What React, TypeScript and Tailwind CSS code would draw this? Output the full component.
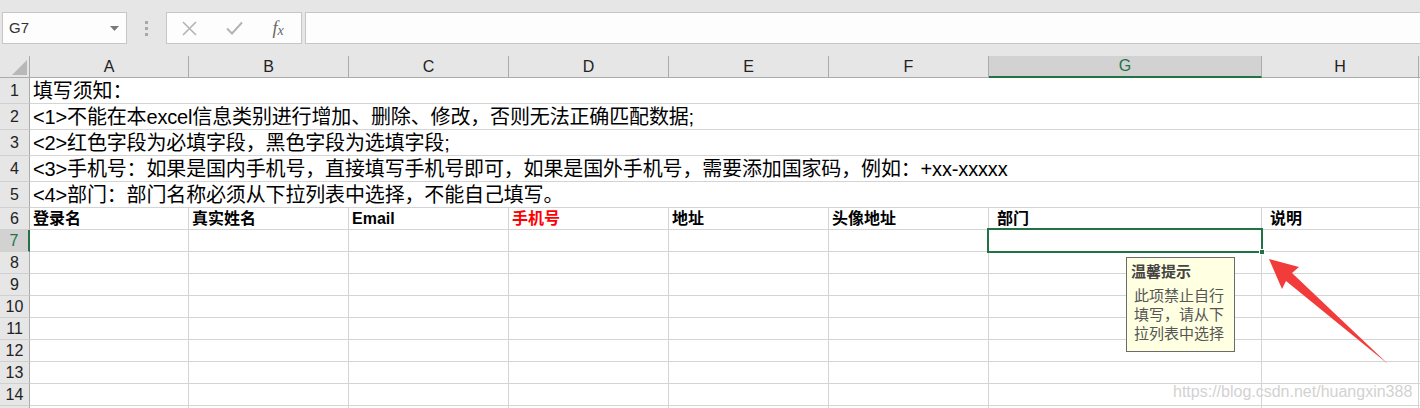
import React from "react";

const cols = [159, 160, 160, 160, 160, 160, 273, 157];
const letters = ["A", "B", "C", "D", "E", "F", "G", "H"];
const font = { fontFamily: '"Liberation Sans", "Noto Sans CJK SC", sans-serif' };

const notes = [
  "填写须知：",
  "<1>不能在本excel信息类别进行增加、删除、修改，否则无法正确匹配数据;",
  "<2>红色字段为必填字段，黑色字段为选填字段;",
  "<3>手机号：如果是国内手机号，直接填写手机号即可，如果是国外手机号，需要添加国家码，例如：+xx-xxxxx",
  "<4>部门：部门名称必须从下拉列表中选择，不能自己填写。",
];

const heads: { t: string; red?: boolean; pl: string }[] = [
  { t: "登录名", pl: "pl-[3px]" },
  { t: "真实姓名", pl: "pl-[3px]" },
  { t: "Email", pl: "pl-[3px]" },
  { t: "手机号", red: true, pl: "pl-[3px]" },
  { t: "地址", pl: "pl-[3px]" },
  { t: "头像地址", pl: "pl-[3px]" },
  { t: "部门", pl: "pl-[8px]" },
  { t: "说明", pl: "pl-[8px]" },
];

function RowHead({ n, h, active }: { n: number | null; h: string; active?: boolean }) {
  return (
    <div
      className={`${h} w-[30px] shrink-0 flex items-center justify-center border-b border-[#d0d0d0] text-[16px] ${
        active
          ? "bg-[#d2d2d2] text-[#217346] border-r-2 border-r-[#217346]"
          : "bg-[#e6e6e6] text-[#222] border-r border-r-[#ababab]"
      }`}
    >
      {n}
    </div>
  );
}

export default function App() {
  return (
    <div className="relative w-[1420px] h-[408px] overflow-hidden bg-white" style={font}>
      {/* toolbar */}
      <div className="h-[56px] bg-[#e6e6e6] relative">
        <div className="flex items-start pt-[12px]">
          <div className="ml-[2px] w-[125px] h-[32px] bg-[#fdfdfd] border border-[#c6c6c6] flex items-center pl-[6px] pr-[7px] text-[15px] text-[#333]">
            <span className="flex-1">G7</span>
            <svg width="9" height="5" viewBox="0 0 9 5">
              <path d="M0 0 L9 0 L4.5 5 Z" fill="#7a7a7a" />
            </svg>
          </div>
          <div className="w-[39px] h-[32px] flex flex-col items-center justify-center gap-[3px]">
            <div className="w-[3px] h-[3px] bg-[#a8a8a8]" />
            <div className="w-[3px] h-[3px] bg-[#a8a8a8]" />
            <div className="w-[3px] h-[3px] bg-[#a8a8a8]" />
          </div>
          <div className="w-[136px] h-[32px] bg-[#fdfdfd] border border-[#c6c6c6] flex items-center">
            <div className="w-[42px] flex justify-center ml-[1px]">
              <svg width="15" height="15" viewBox="0 0 15 15">
                <path d="M1 1 L14 14 M14 1 L1 14" stroke="#b4b4b4" strokeWidth="1.6" />
              </svg>
            </div>
            <div className="w-[48px] flex justify-center">
              <svg width="17" height="14" viewBox="0 0 17 14">
                <path d="M1 7.5 L6 12.5 L16 1.5" stroke="#b4b4b4" strokeWidth="2" fill="none" />
              </svg>
            </div>
            <div
              className="w-[40px] flex justify-center text-[18px] italic text-[#666]"
              style={{ fontFamily: '"Liberation Serif", serif' }}
            >
              <span>f</span>
              <span className="text-[14px] mt-[5px]">x</span>
            </div>
          </div>
          <div className="ml-[3px] flex-1 h-[32px] bg-[#fdfdfd] border border-[#c6c6c6] border-r-0" />
        </div>
      </div>

      {/* column header */}
      <div className="flex h-[22px] bg-[#e6e6e6]">
        <div className="w-[30px] shrink-0 border-r border-b border-[#ababab] flex items-end justify-end pr-[2px] pb-[2px]">
          <svg width="15" height="15" viewBox="0 0 15 15">
            <path d="M15 0 L15 15 L0 15 Z" fill="#b8b8b8" />
          </svg>
        </div>
        {letters.map((l, i) => (
          <div
            key={l}
            style={{ width: cols[i] }}
            className={`shrink-0 flex items-center justify-center text-[16px] border-r border-r-[#ababab] ${
              l === "G"
                ? "bg-[#d2d2d2] text-[#217346] border-b-2 border-b-[#217346]"
                : "text-[#222] border-b border-b-[#ababab]"
            }`}
          >
            {l}
          </div>
        ))}
        <div className="flex-1 border-b border-[#ababab]" />
      </div>

      {/* notes rows */}
      {notes.map((t, i) => (
        <div key={i} className="flex h-[26px]">
          <RowHead n={i + 1} h="h-[26px]" />
          <div className="w-[1389px] shrink-0 border-r border-b border-[#d4d4d4] flex items-center pl-[3px] pt-[1px] text-[20px] tracking-[-0.15px] leading-[22px] text-black whitespace-nowrap">
            {t}
          </div>
          <div className="flex-1 border-b border-[#d4d4d4]" />
        </div>
      ))}

      {/* row 6 headings */}
      <div className="flex h-[22px]">
        <RowHead n={6} h="h-[22px]" />
        {heads.map((c, i) => (
          <div
            key={i}
            style={{ width: cols[i] }}
            className={`shrink-0 border-r border-b border-[#d4d4d4] flex items-center ${c.pl} text-[16px] font-bold whitespace-nowrap ${
              c.red ? "text-[#ff0000]" : "text-black"
            }`}
          >
            {c.t}
          </div>
        ))}
        <div className="flex-1 border-b border-[#d4d4d4]" />
      </div>

      {/* empty rows */}
      {[7, 8, 9, 10, 11, 12, 13, 14, 15].map((n) => (
        <div key={n} className="flex h-[22px]">
          <RowHead n={n === 15 ? null : n} h="h-[22px]" active={n === 7} />
          {cols.map((w, i) => (
            <div key={i} style={{ width: w }} className="shrink-0 border-r border-b border-[#d4d4d4]" />
          ))}
          <div className="flex-1 border-b border-[#d4d4d4]" />
        </div>
      ))}

      {/* selection */}
      <div className="absolute left-[987px] top-[228px] w-[276px] h-[25px] border-2 border-[#217346]" />
      <div className="absolute left-[1259px] top-[249px] w-[6px] h-[6px] bg-[#217346] border border-white" />

      {/* input message tooltip */}
      <div className="absolute left-[1126px] top-[257px] w-[109px] h-[95px] bg-[#ffffe1] border border-[#6b6b6b] px-[4px] pt-[4px]">
        <div className="text-[15px] font-bold text-[#444] leading-[20px]">温馨提示</div>
        <div className="mt-[4px] pl-[3px] text-[15px] text-[#555] leading-[19px]">
          <div>此项禁止自行</div>
          <div>填写，请从下</div>
          <div>拉列表中选择</div>
        </div>
      </div>

      {/* red arrow */}
      <svg className="absolute left-0 top-0" width="1420" height="408" viewBox="0 0 1420 408">
        <polygon
          points="1269,259 1299,267 1292,273 1388,364 1286,281 1282,289"
          fill="#f23b3b"
        />
      </svg>

      {/* watermark */}
      <div className="absolute left-[1173px] top-[380px] text-[16px] text-[#d2d2d2] whitespace-nowrap">
        https://blog.csdn.net/huangxin388
      </div>
    </div>
  );
}
